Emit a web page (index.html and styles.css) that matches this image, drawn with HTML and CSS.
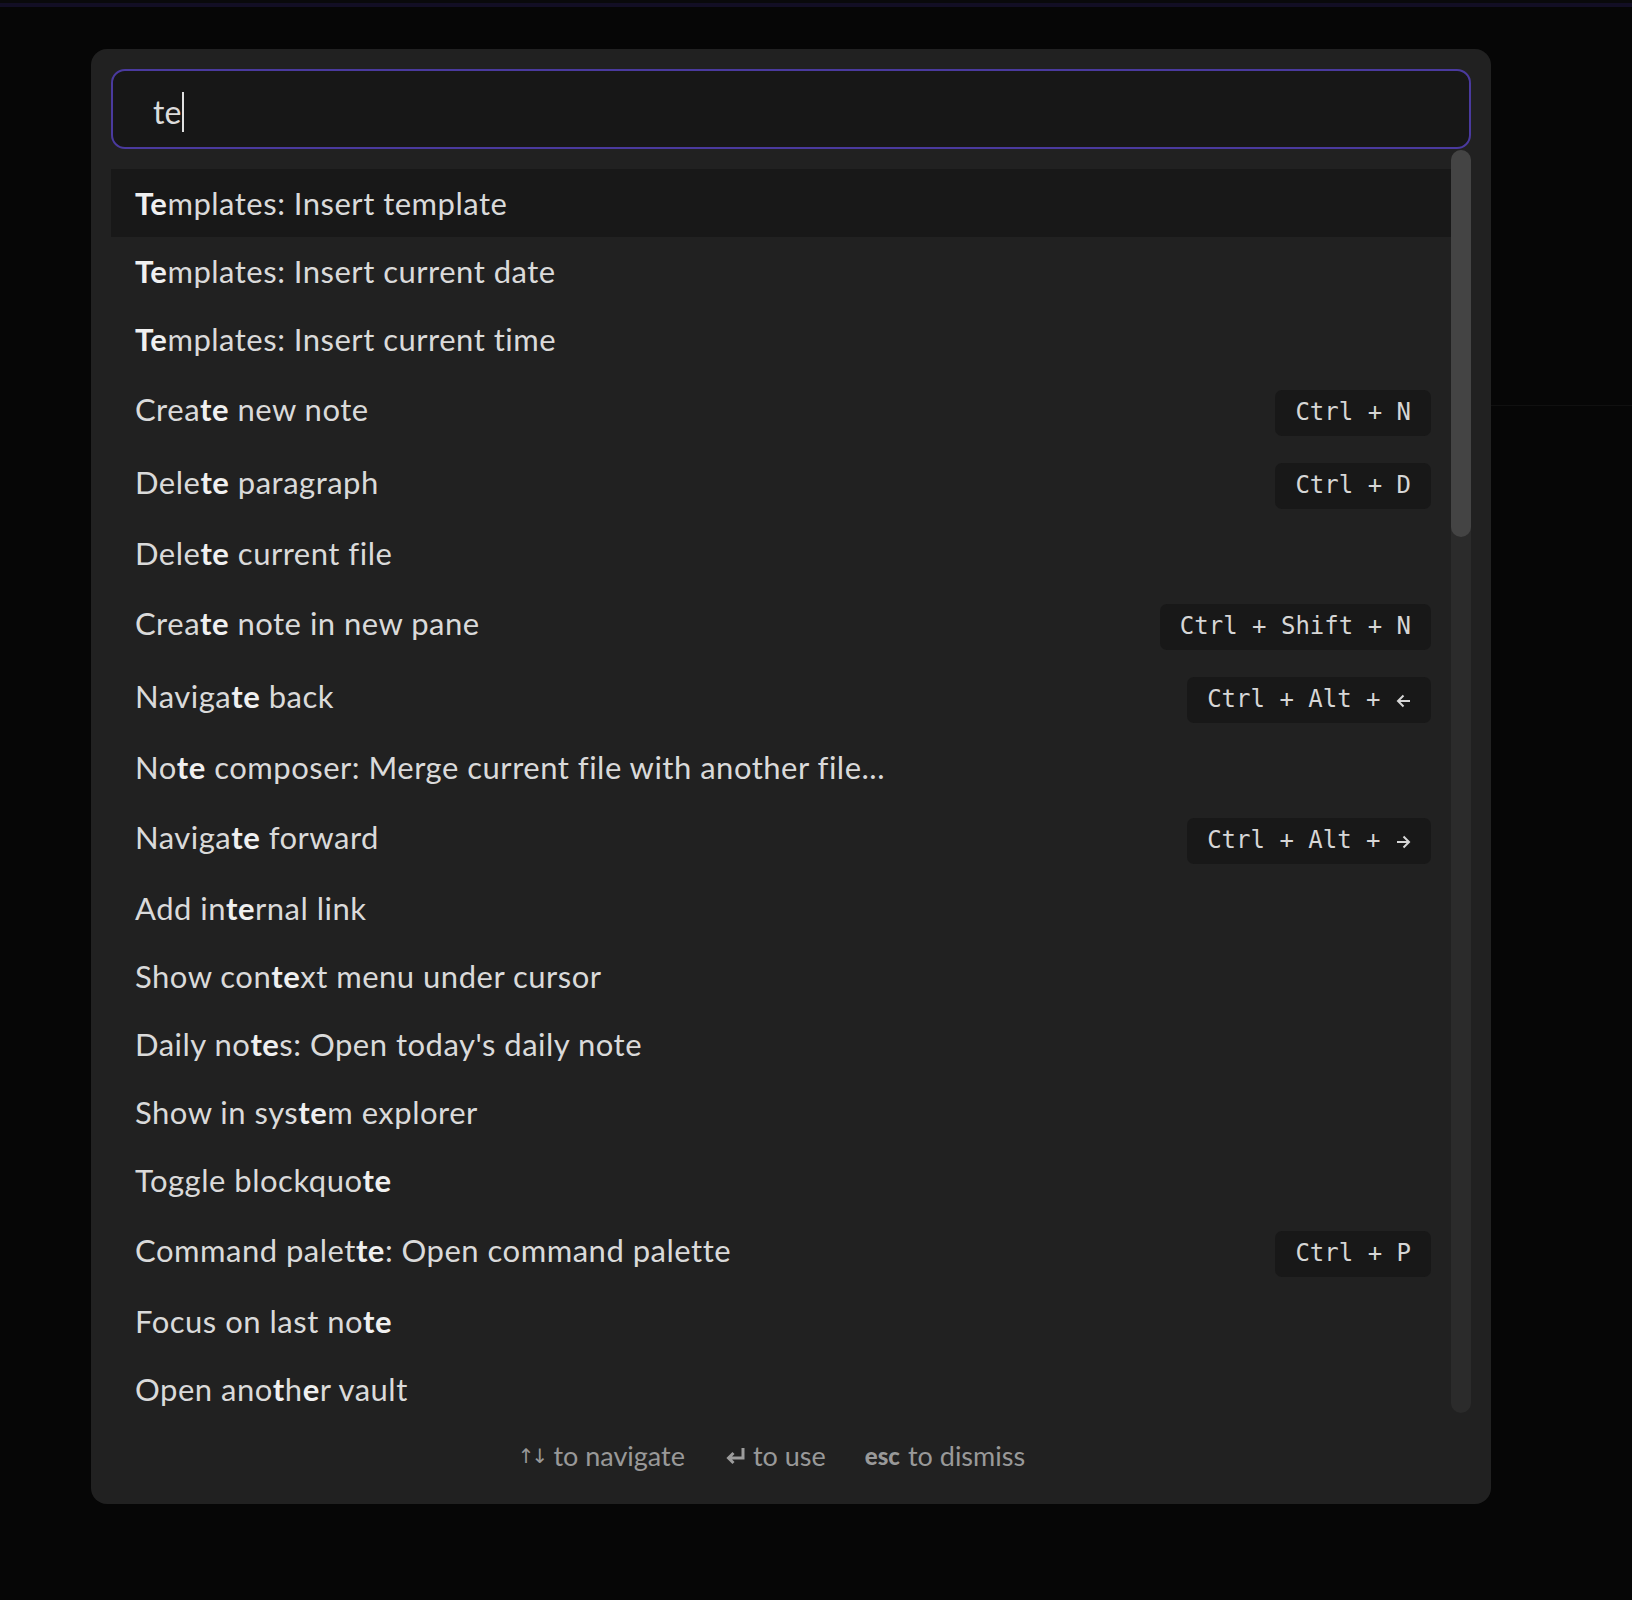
FILE: index.html
```html
<!DOCTYPE html>
<html lang="en">
<head>
<meta charset="utf-8">
<title>Command palette</title>
<link rel="stylesheet" href="styles.css">
</head>
<body>
<div class="topline"></div>
<div class="modal">
  <div class="prompt-input"><span class="typed">te</span><span class="caret"></span></div>
  <div class="results-wrap">
    <div class="results">
      <div class="item is-selected"><span class="label"><b>Te</b>mplates: Insert template</span></div>
      <div class="item"><span class="label"><b>Te</b>mplates: Insert current date</span></div>
      <div class="item"><span class="label"><b>Te</b>mplates: Insert current time</span></div>
      <div class="item"><span class="label">Crea<b>te</b> new note</span><span class="hotkey">Ctrl + N</span></div>
      <div class="item"><span class="label">Dele<b>te</b> paragraph</span><span class="hotkey">Ctrl + D</span></div>
      <div class="item"><span class="label">Dele<b>te</b> current file</span></div>
      <div class="item"><span class="label">Crea<b>te</b> note in new pane</span><span class="hotkey">Ctrl + Shift + N</span></div>
      <div class="item"><span class="label">Naviga<b>te</b> back</span><span class="hotkey">Ctrl + Alt + <svg class="karrow" viewBox="0 0 15 14" width="15" height="14"><path d="M14 7H2M7.5 1.5L2 7l5.5 5.5"/></svg></span></div>
      <div class="item"><span class="label">No<b>te</b> composer: Merge current file with another file...</span></div>
      <div class="item"><span class="label">Naviga<b>te</b> forward</span><span class="hotkey">Ctrl + Alt + <svg class="karrow" viewBox="0 0 15 14" width="15" height="14"><path d="M1 7h12M7.5 1.5L13 7l-5.5 5.5"/></svg></span></div>
      <div class="item"><span class="label">Add in<b>te</b>rnal link</span></div>
      <div class="item"><span class="label">Show con<b>te</b>xt menu under cursor</span></div>
      <div class="item"><span class="label">Daily no<b>te</b>s: Open today's daily note</span></div>
      <div class="item"><span class="label">Show in sys<b>te</b>m explorer</span></div>
      <div class="item"><span class="label">Toggle blockquo<b>te</b></span></div>
      <div class="item"><span class="label">Command palet<b>te</b>: Open command palette</span><span class="hotkey">Ctrl + P</span></div>
      <div class="item"><span class="label">Focus on last no<b>te</b></span></div>
      <div class="item"><span class="label">Open ano<b>t</b>h<b>e</b>r vault</span></div>
    </div>
    <div class="scrollbar"><div class="thumb"></div></div>
  </div>
  <div class="instructions">
    <div class="instruction"><span class="cmd arrows">↑↓</span> to navigate</div>
    <div class="instruction"><svg class="cmd enter" viewBox="0 0 22 20" width="22" height="20"><path d="M19 2v10H5M9.5 7L4.5 12l5 5"/></svg> to use</div>
    <div class="instruction"><span class="cmd esc">esc</span> to dismiss</div>
  </div>
</div>
</body>
</html>
```
FILE: styles.css
```css
html, body {
  margin: 0;
  padding: 0;
}
body {
  width: 1632px;
  height: 1600px;
  overflow: hidden;
  background:
    linear-gradient(#101010, #101010) no-repeat 1491px 405px / 141px 1px,
    #060606;
  font-family: "Lato", "Open Sans", sans-serif;
  color: #dcdcdc;
}
.topline {
  height: 3px;
  background: #09090b;
  border-bottom: 4px solid #120e24;
}
.modal {
  margin: 42px 0 0 91px;
  width: 1400px;
  height: 1455px;
  box-sizing: border-box;
  background: #212121;
  border-radius: 16px;
  padding: 20px 20px 0;
  display: flex;
  flex-direction: column;
}
.prompt-input {
  height: 80px;
  box-sizing: border-box;
  border: 2px solid #4a3a9e;
  border-radius: 14px;
  background: #171717;
  padding: 6px 0 0 40px;
  display: flex;
  align-items: center;
  font-size: 32px;
  color: #dcdcdc;
}
.typed {
  line-height: 40px;
}
.caret {
  display: inline-block;
  width: 2px;
  height: 40px;
  background: #e0e0e0;
  margin-left: 1px;
}
.results-wrap {
  height: 1264px;
  display: flex;
}
.results {
  flex: 1;
  overflow: hidden;
  padding-top: 20px;
  box-sizing: border-box;
}
.item {
  display: flex;
  align-items: center;
  justify-content: space-between;
  padding: 13.5px 20px 13.5px 24px;
  font-size: 31px;
  letter-spacing: 0.5px;
  line-height: 41px;
  color: #dadada;
}
.item.is-selected {
  background: #181818;
}
.item b {
  font-weight: 700;
  color: #f0f0f0;
}
.hotkey {
  font-family: "DejaVu Sans Mono", "Liberation Mono", monospace;
  font-size: 24px;
  letter-spacing: 0;
  height: 46px;
  padding: 0 20px;
  border-radius: 7px;
  background: #181818;
  color: #d6d6d6;
  white-space: pre;
  display: flex;
  align-items: center;
  transform: translateY(3px);
}
.karrow {
  fill: none;
  stroke: #d6d6d6;
  stroke-width: 2;
  margin-left: 1px;
  margin-top: 2px;
}
.scrollbar {
  width: 20px;
  margin-top: 1px;
  background: #2b2b2b;
  border-radius: 10px;
}
.thumb {
  height: 387px;
  background: #444444;
  border-radius: 10px;
}
.instructions {
  height: 85px;
  display: flex;
  justify-content: center;
  align-items: center;
  font-size: 27px;
  color: #999999;
}
.instruction {
  margin-right: 39px;
  display: flex;
  align-items: center;
}
.cmd {
  margin-right: 8px;
}
.arrows {
  font-family: "DejaVu Sans", sans-serif;
  font-size: 20px;
  letter-spacing: -3px;
}
.enter {
  fill: none;
  stroke: #9c9c9c;
  stroke-width: 3;
  margin-right: 7px;
}
.esc {
  font-weight: 900;
  font-size: 24px;
}
```
